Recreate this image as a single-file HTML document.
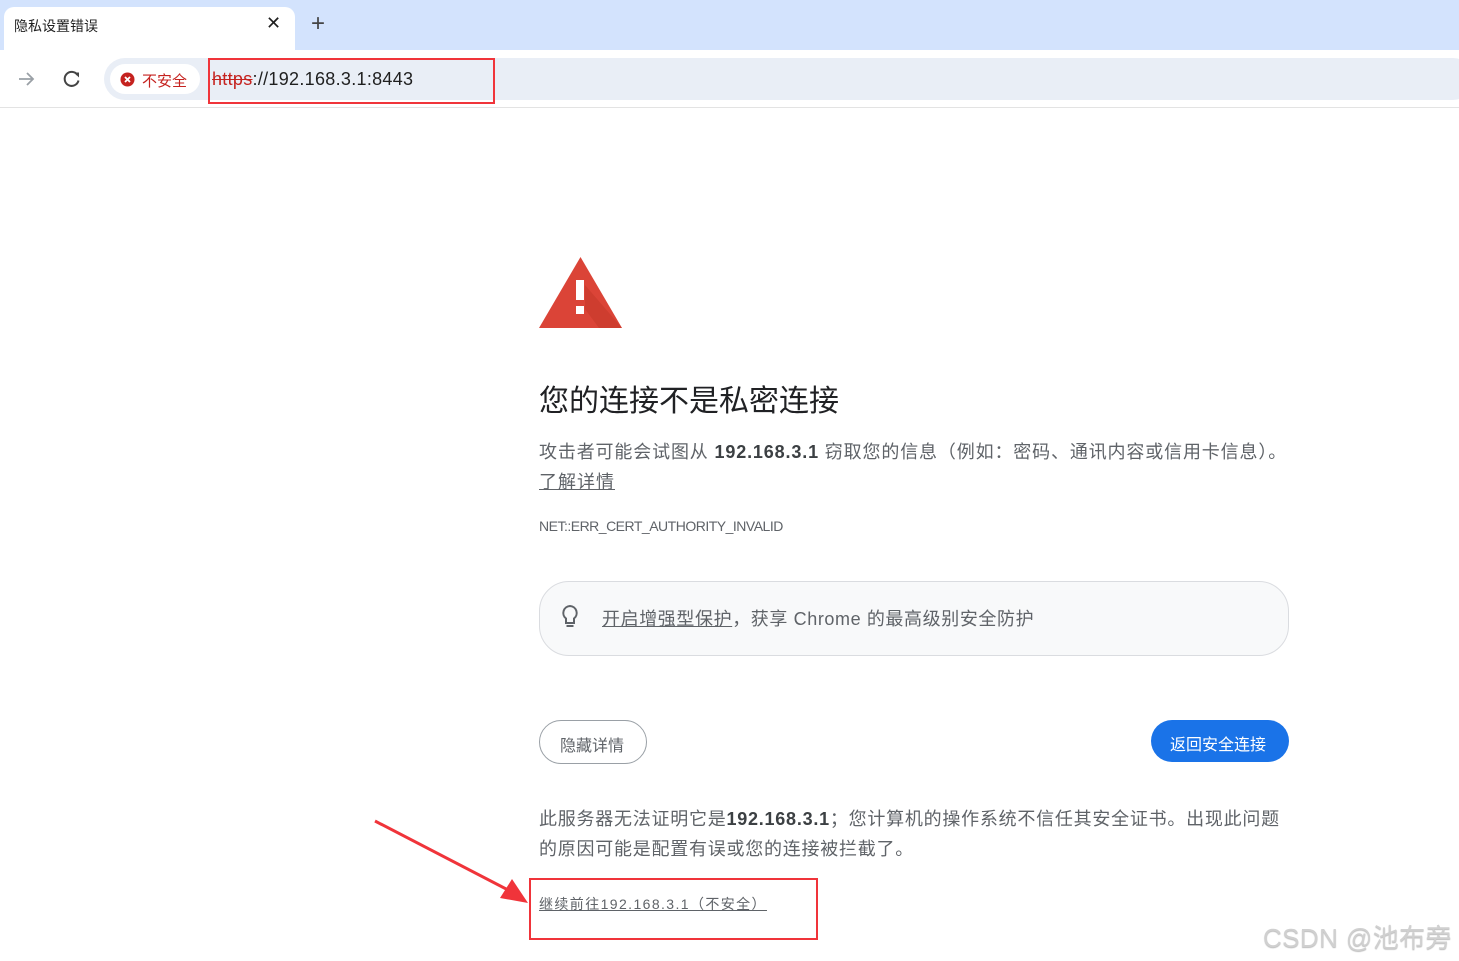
<!DOCTYPE html>
<html><head><meta charset="utf-8"><style>
*{margin:0;padding:0;box-sizing:border-box}
body{width:1459px;height:961px;overflow:hidden;background:#fff;font-family:"Liberation Sans","Noto Sans CJK SC",sans-serif;position:relative;color:#3c4043}
.abs{position:absolute;white-space:nowrap}
.tabbar{position:absolute;left:0;top:0;width:1459px;height:50px;background:#d3e3fd}
.tab{position:absolute;left:4px;top:7px;width:291px;height:43px;background:#fff;border-radius:10px 10px 0 0}
.toolbar{position:absolute;left:0;top:50px;width:1459px;height:58px;background:#fff;border-bottom:1px solid #e3e3e3}
.omni{position:absolute;left:104px;top:58px;width:1370px;height:42px;background:#e9eef6;border-radius:21px}
.chip{position:absolute;left:110px;top:64px;width:90px;height:30px;background:#fff;border-radius:15px}
</style></head><body>
<div class="tabbar"></div>
<div class="tab"></div>
<div class="abs" style="left:14px;top:16px;font-size:14px;color:#1f1f1f">隐私设置错误</div>
<div class="abs" style="left:266px;top:13px;font-size:18px;color:#1f1f1f">✕</div>
<div class="abs" style="left:311px;top:10px;font-size:24px;color:#444">+</div>
<div class="toolbar"></div>
<svg class="abs" style="left:17px;top:70px" width="20" height="18"><path d="M2 9H16M10 3L16 9L10 15" stroke="#9aa0a6" stroke-width="1.8" fill="none"/></svg>
<svg class="abs" style="left:62px;top:69px" width="20" height="20"><path d="M15.5 6A7 7 0 1 0 16.5 11.5" stroke="#444" stroke-width="2" fill="none"/><path d="M12 3.5L17 3.5L17 8.5Z" fill="#444"/></svg>
<div class="omni"></div>
<div class="chip"></div>
<svg class="abs" style="left:120px;top:72px" width="15" height="15"><circle cx="7.5" cy="7.5" r="7" fill="#c5221f"/><path d="M5 5L10 10M10 5L5 10" stroke="#fff" stroke-width="1.8"/></svg>
<div class="abs" style="left:142px;top:70px;font-size:15px;color:#c5221f">不安全</div>
<div class="abs" style="left:212px;top:69px;font-size:18px;color:#1f1f1f;letter-spacing:0.3px"><span style="color:#c5221f;text-decoration:line-through">https</span>://192.168.3.1:8443</div>
<div class="abs" style="left:208px;top:58px;width:287px;height:46px;border:2px solid #f0343a"></div>

<svg class="abs" style="left:539px;top:257px" width="83" height="71"><polygon points="41.5,0 83,71 0,71" fill="#db4437"/><polygon points="46,28 83,71 60,71 46,52" fill="#c53929" opacity=".6"/><rect x="37" y="23" width="8" height="20" fill="#fff"/><rect x="37" y="49" width="8" height="8" fill="#fff"/></svg>
<div class="abs" style="left:539px;top:376px;font-size:30px;color:#202124">您的连接不是私密连接</div>
<div class="abs" style="left:539px;top:438px;font-size:18px;color:#5f6368;letter-spacing:0.85px">攻击者可能会试图从 <b style="color:#3c4043">192.168.3.1</b> 窃取您的信息（例如：密码、通讯内容或信用卡信息）。</div>
<div class="abs" style="left:539px;top:468px;font-size:18px;color:#5f6368;text-decoration:underline;letter-spacing:1px">了解详情</div>
<div class="abs" style="left:539px;top:518px;font-size:14px;color:#5f6368;letter-spacing:-0.5px">NET::ERR_CERT_AUTHORITY_INVALID</div>

<div class="abs" style="left:539px;top:581px;width:750px;height:75px;background:#f8f9fa;border:1px solid #dadce0;border-radius:30px"></div>
<svg class="abs" style="left:560px;top:604px" width="20" height="26"><path d="M10 2A7 7 0 0 0 6 14.5V19H14V14.5A7 7 0 0 0 10 2Z" stroke="#5f6368" stroke-width="2" fill="none"/><rect x="6.5" y="21" width="7" height="2" fill="#5f6368"/></svg>
<div class="abs" style="left:602px;top:605px;font-size:18px;color:#5f6368;letter-spacing:0.6px"><u>开启增强型保护</u>，获享 Chrome 的最高级别安全防护</div>

<div class="abs" style="left:539px;top:720px;width:108px;height:44px;border:1px solid #9aa0a6;border-radius:22px"></div>
<div class="abs" style="left:560px;top:732px;font-size:16px;color:#5f6368">隐藏详情</div>
<div class="abs" style="left:1151px;top:720px;width:138px;height:42px;background:#1a73e8;border-radius:21px"></div>
<div class="abs" style="left:1170px;top:731px;font-size:16px;color:#fff">返回安全连接</div>

<div class="abs" style="left:539px;top:805px;font-size:18px;color:#5f6368;letter-spacing:0.75px">此服务器无法证明它是<b style="color:#3c4043">192.168.3.1</b>；您计算机的操作系统不信任其安全证书。出现此问题</div>
<div class="abs" style="left:539px;top:835px;font-size:18px;color:#5f6368;letter-spacing:0.75px">的原因可能是配置有误或您的连接被拦截了。</div>
<div class="abs" style="left:539px;top:894px;font-size:14px;color:#5f6368;text-decoration:underline;letter-spacing:1.4px">继续前往192.168.3.1（不安全）</div>
<div class="abs" style="left:529px;top:878px;width:289px;height:62px;border:2px solid #f0343a"></div>
<svg class="abs" style="left:370px;top:815px" width="165" height="95"><path d="M5 6L140 76" stroke="#f0343a" stroke-width="3"/><polygon points="158,88 130,83 142,64" fill="#f0343a"/></svg>
<div class="abs" style="left:1263px;top:918px;font-size:26px;color:#d0d0d0;text-shadow:0 1px 1px #bbb;letter-spacing:0.4px">CSDN @池布旁</div>
</body></html>
